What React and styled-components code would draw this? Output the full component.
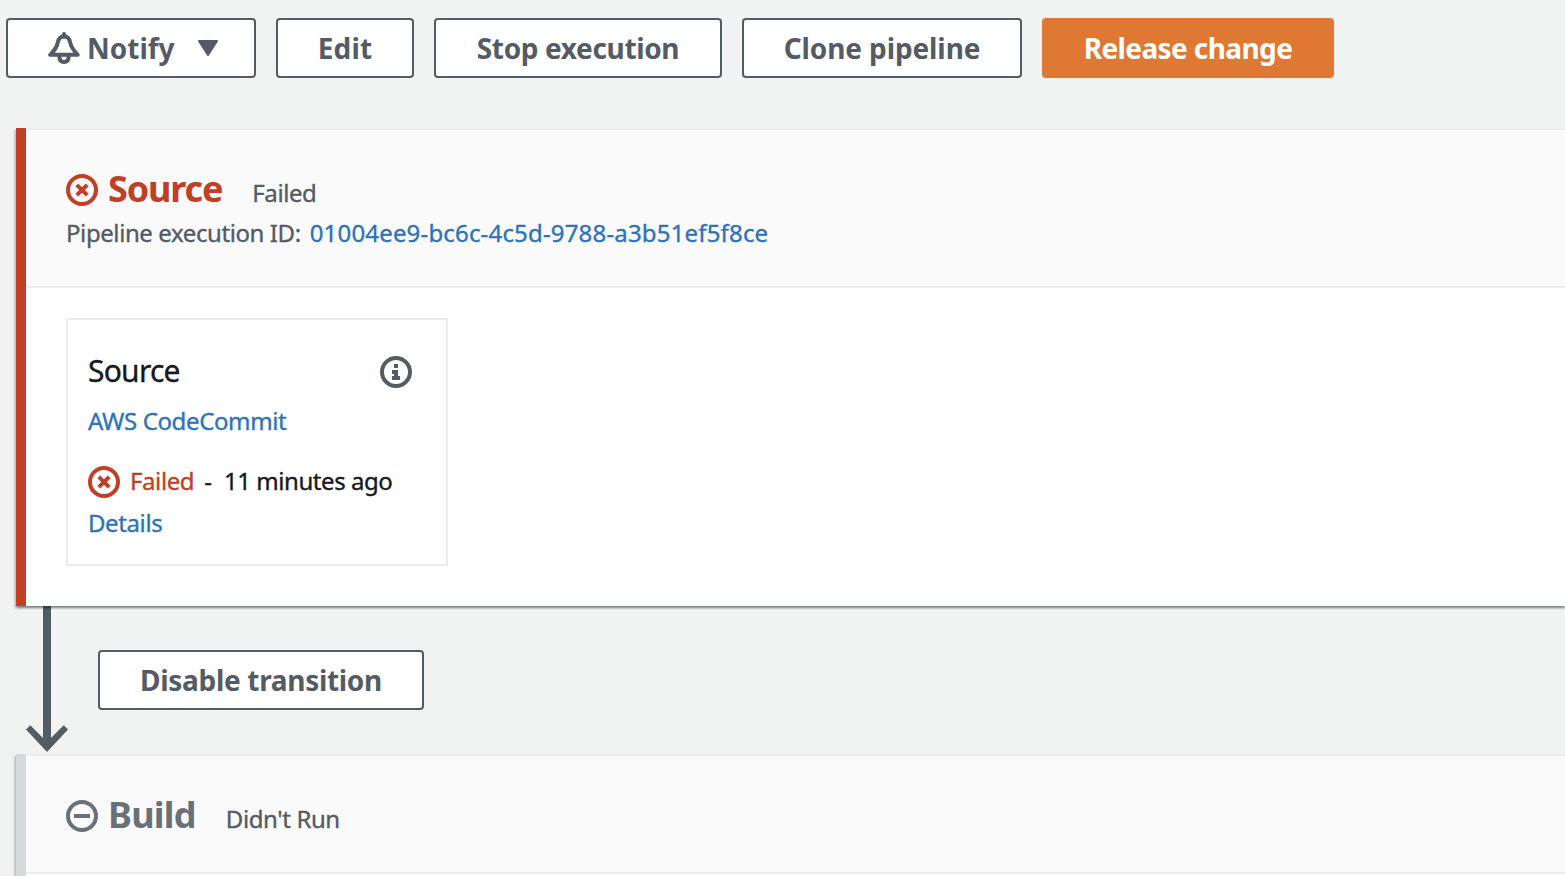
import React from 'react';
import styled, { createGlobalStyle } from 'styled-components';

const color = {
  page: '#f1f3f3',
  slate: '#545b64',
  muted: '#687078',
  ink: '#16191f',
  link: '#2e73b8',
  error: '#c13f26',
  orange: '#df7833',
  line: '#eaeded',
};

const GlobalStyle = createGlobalStyle`
  *, *::before, *::after { box-sizing: border-box; }
  html, body { margin: 0; height: 100%; overflow: hidden; }
  body {
    background: ${color.page};
    color: ${color.ink};
    font-family: 'Noto Sans', 'Open Sans', sans-serif;
    font-size: 24px;
    -webkit-text-stroke: 0.35px currentColor;
  }
`;

const Page = styled.main`
  height: 100vh;
  overflow: hidden;
  padding-top: 18px;
`;

const Toolbar = styled.div`
  display: flex;
  gap: 20px;
  padding-left: 6px;
  margin-bottom: 50px;
`;

const Button = styled.button`
  display: flex;
  align-items: center;
  justify-content: ${(p) => (p.$withIcon ? 'flex-start' : 'center')};
  flex: none;
  width: ${(p) => p.$width}px;
  height: 60px;
  padding: ${(p) => (p.$withIcon ? '0 0 0 40px' : '0')};
  border: 2px solid ${(p) => (p.$primary ? color.orange : color.slate)};
  border-radius: 4px;
  background: ${(p) => (p.$primary ? color.orange : '#fff')};
  color: ${(p) => (p.$primary ? '#fff' : color.slate)};
  font-family: inherit;
  font-size: 28px;
  font-weight: 700;
  -webkit-text-stroke: 0;
`;

const ButtonLabel = styled.span`
  line-height: 38px;
  letter-spacing: ${(p) => p.$tracking || 0}px;
  white-space: nowrap;
`;

const BellSvg = styled.svg`
  flex: none;
  margin-right: 7px;
`;

const CaretSvg = styled.svg`
  flex: none;
  margin-left: 23px;
`;

const Stage = styled.section`
  position: relative;
  z-index: 1;
  margin-left: 16px;
  border-left: 10px solid ${(p) => p.$accent};
  background: #fff;
  box-shadow: 0 2px 2px 0 rgba(0, 28, 36, 0.3), 2px 2px 2px 0 rgba(0, 28, 36, 0.15),
    -2px 2px 2px 0 rgba(0, 28, 36, 0.15);
`;

const StageHeader = styled.header`
  height: ${(p) => p.$height}px;
  padding: 36px 40px 0;
  border-top: 2px solid ${color.line};
  border-bottom: 2px solid ${color.line};
  background: #fafafa;
`;

const TitleRow = styled.div`
  display: flex;
  height: 44px;
  color: ${(p) => p.$color};
`;

const StatusSvg = styled.svg`
  flex: none;
  display: block;
  margin-top: ${(p) => p.$top || 0}px;
  color: ${(p) => p.$color || 'inherit'};
`;

const Heading = styled.div`
  display: flex;
  align-items: baseline;
  gap: 30px;
  margin-left: 10px;
  line-height: 46px;
`;

const StageName = styled.h2`
  margin: 0;
  font-size: 36px;
  font-weight: 700;
  letter-spacing: ${(p) => p.$tracking}px;
  -webkit-text-stroke: 0;
`;

const StageStatus = styled.span`
  color: ${color.slate};
  letter-spacing: -0.4px;
`;

const ExecutionLine = styled.div`
  display: flex;
  gap: 9px;
  margin-top: 8px;
  line-height: 30px;
  color: ${color.slate};
  letter-spacing: -0.41px;
`;

const Link = styled.a`
  color: ${color.link};
  letter-spacing: ${(p) => p.$tracking}px;
`;

const StageBody = styled.div`
  height: 318px;
  padding: 30px 40px 0;
`;

const ActionCard = styled.article`
  display: flex;
  flex-direction: column;
  width: 382px;
  height: 248px;
  padding: 30px 34px 0 20px;
  border: 2px solid ${color.line};
  line-height: 30px;
`;

const ActionHeader = styled.div`
  display: flex;
  justify-content: space-between;
  height: 40px;
  margin-bottom: 16px;
`;

const ActionName = styled.span`
  font-size: 30px;
  line-height: 42px;
  letter-spacing: -0.76px;
`;

const ActionStatus = styled.div`
  display: flex;
  height: 30px;
  margin: 30px 0 12px;
`;

const FailedText = styled.span`
  margin: 0 10px;
  color: ${color.error};
  letter-spacing: -0.4px;
`;

const Elapsed = styled.span`
  margin-left: 12px;
  letter-spacing: -0.44px;
`;

const Transition = styled.div`
  display: flex;
  height: 148px;
  padding-left: 26px;
`;

const ArrowSvg = styled.svg`
  flex: none;
  margin-right: 30px;
`;

const TransitionAction = styled.div`
  padding-top: 44px;
`;

const Bell = () => (
  <BellSvg width="32" height="32" viewBox="0 0 32 32" fill="none" stroke="currentColor" strokeWidth="4">
    <path d="M16 2V5" strokeLinecap="round" />
    <path d="M16 4.200C12.300 4.200 10.600 6.500 9.800 10.500C8.800 15.800 5.800 19.200 2.200 22.800H29.800C26.200 19.200 23.200 15.800 22.200 10.500C21.400 6.500 19.700 4.200 16 4.200Z" strokeLinejoin="round" />
    <path d="M11.300 24C11.300 28 13.300 30 16 30S20.700 28 20.700 24" />
  </BellSvg>
);

const Caret = () => (
  <CaretSvg width="20" height="16" viewBox="0 0 20 16" fill="currentColor" stroke="currentColor" strokeWidth="2" strokeLinejoin="round">
    <path d="M1 1H19L10 15Z" />
  </CaretSvg>
);

const StatusIcon = ({ kind, top, tint }) => (
  <StatusSvg $top={top} $color={tint} width="32" height="32" viewBox="0 0 32 32" fill="none" stroke="currentColor" strokeWidth="4">
    <circle cx="16" cy="16" r="14" />
    {kind === 'failed' && <path d="M10.800 10.800L21.200 21.200M21.200 10.800L10.800 21.200" />}
    {kind === 'idle' && <path d="M8 16H24" />}
  </StatusSvg>
);

const InfoIcon = () => (
  <StatusSvg $top={6} $color={color.slate} width="32" height="32" viewBox="0 0 32 32" fill="currentColor">
    <circle cx="16" cy="16" r="14" fill="none" stroke="currentColor" strokeWidth="4" />
    <path d="M14 8H18V12H14ZM12 14H18V20H20V24H12V20H14V18H12Z" />
  </StatusSvg>
);

export default function App() {
  return (
    <Page>
      <GlobalStyle />
      <Toolbar>
        <Button $width={250} $withIcon>
          <Bell />
          <ButtonLabel>Notify</ButtonLabel>
          <Caret />
        </Button>
        <Button $width={138}><ButtonLabel $tracking={0.2}>Edit</ButtonLabel></Button>
        <Button $width={288}><ButtonLabel $tracking={-0.36}>Stop execution</ButtonLabel></Button>
        <Button $width={280}><ButtonLabel $tracking={-0.1}>Clone pipeline</ButtonLabel></Button>
        <Button $width={292} $primary><ButtonLabel $tracking={-0.6}>Release change</ButtonLabel></Button>
      </Toolbar>

      <Stage $accent={color.error}>
        <StageHeader $height={160}>
          <TitleRow $color={color.error}>
            <StatusIcon kind="failed" top={8} />
            <Heading>
              <StageName $tracking={-1.15}>Source</StageName>
              <StageStatus>Failed</StageStatus>
            </Heading>
          </TitleRow>
          <ExecutionLine>
            <span>Pipeline execution ID:</span>
            <Link $tracking={0.17}>01004ee9-bc6c-4c5d-9788-a3b51ef5f8ce</Link>
          </ExecutionLine>
        </StageHeader>
        <StageBody>
          <ActionCard>
            <ActionHeader>
              <ActionName>Source</ActionName>
              <InfoIcon />
            </ActionHeader>
            <Link $tracking={-0.37}>AWS CodeCommit</Link>
            <ActionStatus>
              <StatusIcon kind="failed" tint={color.error} />
              <FailedText>Failed</FailedText>
              <span>-</span>
              <Elapsed>11 minutes ago</Elapsed>
            </ActionStatus>
            <Link $tracking={-0.4}>Details</Link>
          </ActionCard>
        </StageBody>
      </Stage>

      <Transition>
        <ArrowSvg width="42" height="148" viewBox="0 0 42 148" fill={color.slate}>
          <path d="M17 0H25V132L37.700 119.300L42 123.500L21 146L0 123.500L4.300 119.300L17 132Z" />
        </ArrowSvg>
        <TransitionAction>
          <Button $width={326}><ButtonLabel $tracking={-0.31}>Disable transition</ButtonLabel></Button>
        </TransitionAction>
      </Transition>

      <Stage $accent="#d5dbdb">
        <StageHeader $height={120}>
          <TitleRow $color={color.muted}>
            <StatusIcon kind="idle" top={8} />
            <Heading>
              <StageName $tracking={-0.75}>Build</StageName>
              <StageStatus>Didn't Run</StageStatus>
            </Heading>
          </TitleRow>
        </StageHeader>
        <StageBody />
      </Stage>
    </Page>
  );
}
